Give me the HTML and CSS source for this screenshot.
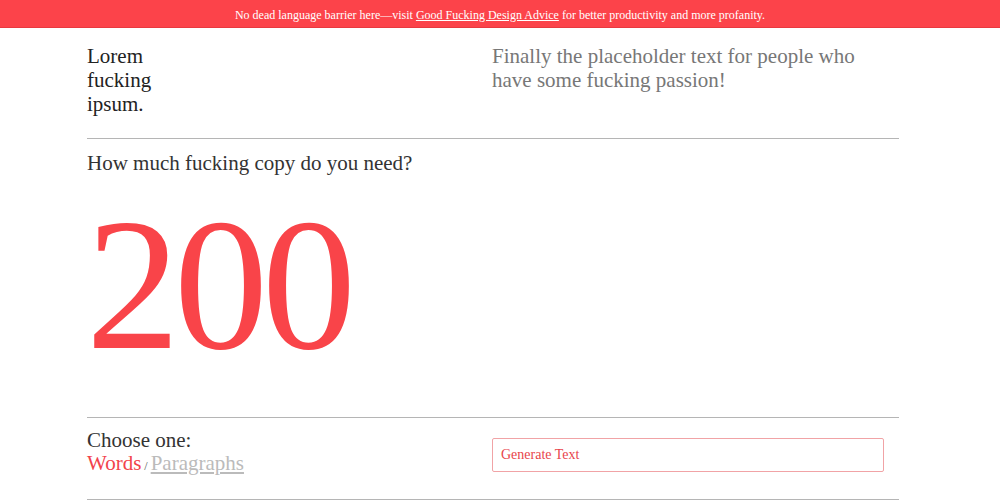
FILE: index.html
```
<!DOCTYPE html>
<html>
<head>
<meta charset="utf-8">
<link rel="stylesheet" href="styles.css">
</head>
<body>
<div class="banner">No dead language barrier here—visit <a href="#">Good Fucking Design Advice</a> for better productivity and more profanity.</div>
<main class="wrap">
  <header class="top">
    <h1 class="logo">Lorem fucking ipsum.</h1>
    <p class="tagline">Finally the placeholder text for people who have some fucking passion!</p>
  </header>
  <section class="amount">
    <p class="question">How much fucking copy do you need?</p>
    <div class="count">200</div>
  </section>
  <section class="controls">
    <div class="choose">
      <div>Choose one:</div>
      <div class="opts"><span class="active">Words</span><span class="sep">/</span><a href="#" class="inactive">Paragraphs</a></div>
    </div>
    <div class="gen">
      <button class="btn">Generate Text</button>
    </div>
  </section>
</main>
</body>
</html>
```
FILE: styles.css
```
* { box-sizing: border-box; }
html, body { margin: 0; padding: 0; background: #fff; }
body { font-family: "Liberation Serif", "Times New Roman", serif; color: #333; }
.banner {
  height: 28px;
  background: #fc434a;
  border-bottom: 1px solid #e8393f;
  color: #fff;
  font-size: 12px;
  line-height: 30px;
  text-align: center;
}
.banner a { color: #fff; text-decoration: underline; }
.wrap { width: 812px; margin: 0 auto; position: relative; left: -7px; }
.top {
  display: grid;
  grid-template-columns: 405px 1fr;
  padding: 16px 0 22px;
  border-bottom: 1px solid #b5b5b5;
}
.logo {
  margin: 0;
  font-weight: normal;
  font-size: 21px;
  line-height: 24px;
  color: #222;
  width: min-content;
}
.tagline {
  margin: 0;
  font-size: 21px;
  line-height: 24px;
  color: #777;
  max-width: 380px;
}
.amount { border-bottom: 1px solid #b5b5b5; padding: 12px 0 0; height: 279px; }
.question { margin: 0; font-size: 21px; line-height: 24px; color: #333; }
.count {
  color: #f94449;
  font-size: 188px;
  line-height: 1;
  letter-spacing: -6px;
  margin-top: 16px;
  margin-left: -1px;
}
.controls {
  display: grid;
  grid-template-columns: 405px 1fr;
  padding: 11px 0 0;
  height: 82px;
  border-bottom: 1px solid #b5b5b5;
}
.choose { font-size: 21px; line-height: 23px; color: #333; }
.opts { display: flex; align-items: baseline; }
.active { color: #f2434b; }
.sep { font-size: 12px; color: #555; margin: 0 3px; }
.inactive { color: #bbb; text-decoration: underline; }
.gen { padding-top: 9px; }
.btn {
  width: 392px;
  height: 34px;
  background: #fff;
  border: 1px solid #f1a3a6;
  border-radius: 2px;
  color: #e8454b;
  font-family: "Liberation Serif", "Times New Roman", serif;
  font-size: 14px;
  text-align: left;
  padding: 0 8px;
}
```
